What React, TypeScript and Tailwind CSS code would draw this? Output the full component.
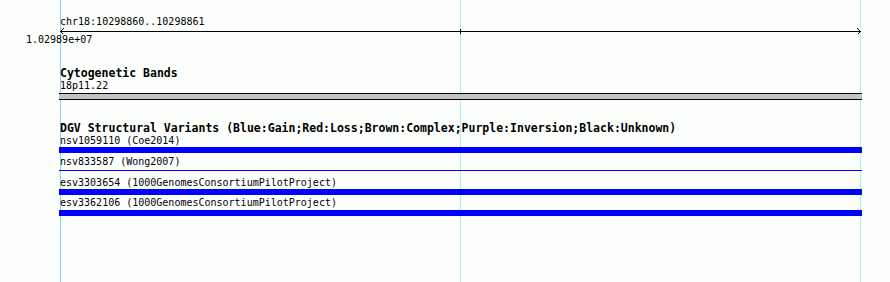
const variants = [
  { label: "nsv1059110 (Coe2014)", gap: "mt-px", barGap: "mt-px", bar: "h-[6px]" },
  { label: "nsv833587 (Wong2007)", gap: "mt-[3px]", barGap: "mt-[3px]", bar: "h-px" },
  { label: "esv3303654 (1000GenomesConsortiumPilotProject)", gap: "mt-[6px]", barGap: "mt-px", bar: "h-[6px]" },
  { label: "esv3362106 (1000GenomesConsortiumPilotProject)", gap: "mt-[2px]", barGap: "mt-[2px]", bar: "h-[6px]" },
];

function Ruler() {
  return (
    <svg width="803" height="7" className="block" shapeRendering="crispEdges">
      <line x1="1" y1="4.5" x2="802" y2="4.5" stroke="#000" strokeWidth="1" />
      <polyline points="5,1 1.5,4.5 5,8" fill="none" stroke="#000" strokeWidth="1" shapeRendering="auto" />
      <polyline points="798,1 801.5,4.5 798,8" fill="none" stroke="#000" strokeWidth="1" shapeRendering="auto" />
      <line x1="401.5" y1="2" x2="401.5" y2="7" stroke="#000" strokeWidth="1" />
    </svg>
  );
}

export default function App() {
  return (
    <div className="relative w-[890px] h-[282px] overflow-hidden bg-[#fdfffd] text-black font-['DejaVu_Sans_Mono',monospace]">
      {/* grid lines sit under the tracks */}
      <div className="absolute top-0 bottom-0 left-[60px] w-px bg-[#87cefa]" />
      <div className="absolute top-0 bottom-0 left-[460px] w-px bg-[#afeeee]" />
      <div className="absolute top-0 bottom-0 left-[860px] w-px bg-[#afeeee]" />

      <div className="relative ml-[59px] w-[803px] flex flex-col">
        <div className="mt-[16px] pl-px text-[10px] leading-[11px] whitespace-nowrap">chr18:10298860..10298861</div>
        <Ruler />
        <div className="-ml-[33px] text-[10px] leading-[11px] whitespace-nowrap">1.02989e+07</div>

        <div className="mt-[22px] pl-px text-[11.5px] leading-[12px] font-bold whitespace-nowrap">Cytogenetic Bands</div>
        <div className="mt-px pl-px text-[10px] leading-[11px] whitespace-nowrap">18p11.22</div>
        <div className="mt-[2px] h-[7px] border-y border-black bg-[#c4c2c4]" />

        <div className="mt-[22px] pl-px text-[11.5px] leading-[12px] font-bold whitespace-nowrap">
          DGV Structural Variants (Blue:Gain;Red:Loss;Brown:Complex;Purple:Inversion;Black:Unknown)
        </div>
        {variants.map((v) => (
          <div key={v.label} className={`flex flex-col ${v.gap}`}>
            <div className="pl-px text-[10px] leading-[11px] whitespace-nowrap">{v.label}</div>
            <div className={`${v.barGap} ${v.bar} bg-[#0000ff]`} />
          </div>
        ))}
      </div>
    </div>
  );
}
